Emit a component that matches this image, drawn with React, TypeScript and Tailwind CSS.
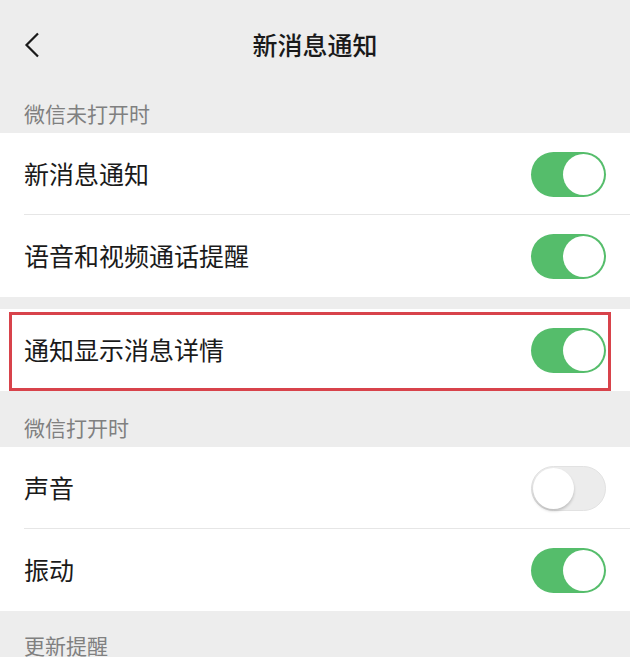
const font = { fontFamily: '"Noto Sans CJK SC", "Noto Sans", sans-serif' };

function Toggle({ on }: { on: boolean }) {
  return (
    <div
      className={
        on
          ? 'relative h-[45px] w-[75px] rounded-full bg-[#55bd6b]'
          : 'relative h-[45px] w-[75px] rounded-full bg-[#ececec] border border-[#e2e2e2]'
      }
    >
      <div
        className={
          on
            ? 'absolute right-[2px] top-[2px] h-[41px] w-[41px] rounded-full bg-white'
            : 'absolute left-[1px] top-[1px] h-[41px] w-[41px] rounded-full bg-white shadow-[0_2px_3px_rgba(0,0,0,0.2)]'
        }
      />
    </div>
  );
}

function Row({ label, on, divider }: { label: string; on: boolean; divider?: boolean }) {
  return (
    <div className="relative flex h-[82px] items-center justify-between pl-[24px] pr-[24px]">
      <span className="text-[25px] text-[#1a1a1a]">{label}</span>
      <Toggle on={on} />
      {divider && <div className="absolute bottom-0 left-[24px] right-0 h-px bg-[#e6e6e6]" />}
    </div>
  );
}

function SectionLabel({ text, className }: { text: string; className: string }) {
  return (
    <div className={`flex items-end px-[24px] text-[21px] text-[#808080] ${className}`}>{text}</div>
  );
}

export default function App() {
  return (
    <div className="h-[657px] w-[630px] overflow-hidden bg-[#ededed]" style={font}>
      <div className="relative flex h-[90px] items-center justify-center">
        <svg className="absolute left-[23px] top-[32px]" width="18" height="26" viewBox="0 0 18 26" fill="none">
          <path d="M15 1.5 L3.5 13 L15 24.5" stroke="#1a1a1a" strokeWidth="2.2" />
        </svg>
        <span className="text-[25px] font-medium text-[#1a1a1a]">新消息通知</span>
      </div>

      <SectionLabel text="微信未打开时" className="h-[43px] pb-[4px]" />
      <div className="bg-white">
        <Row label="新消息通知" on divider />
        <Row label="语音和视频通话提醒" on />
      </div>

      <div className="h-[12px]" />
      <div className="relative bg-white">
        <Row label="通知显示消息详情" on />
        <div className="pointer-events-none absolute bottom-0 left-[9px] top-[3px] w-[602px] border-[3px] border-[#d8434b]" />
      </div>

      <SectionLabel text="微信打开时" className="h-[56px] pb-[4px]" />
      <div className="bg-white">
        <Row label="声音" on={false} divider />
        <Row label="振动" on />
      </div>

      <SectionLabel text="更新提醒" className="h-[50px] pb-[0px]" />
    </div>
  );
}
